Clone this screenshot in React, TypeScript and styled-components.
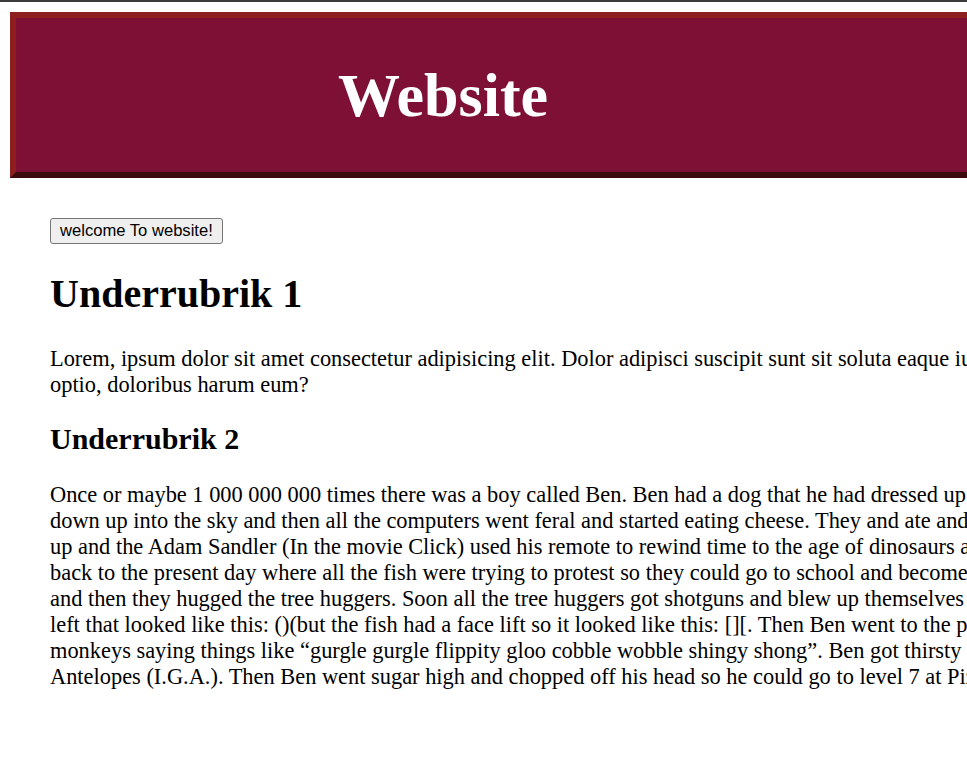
import React from 'react';
import styled, { createGlobalStyle } from 'styled-components';

const GlobalStyle = createGlobalStyle`
	html {
		border-top: 2px solid #3b3b3b;
		overflow: hidden;
		background: #ffffff;
	}
	body {
		margin: 10px 0 0 10px;
		font-family: 'Liberation Serif', 'Times New Roman', serif;
		color: #000000;
	}
`;

const Page = styled.div`
	width: calc(100vw - 10px);
	overflow: hidden;
`;

const Header = styled.header`
	display: flex;
	align-items: center;
	width: 1300px;
	height: 154px;
	padding-left: 322px;
	background-color: #7e1036;
	border-style: solid;
	border-width: 6px;
	border-color: #8e1f1f #3c0b0b #3c0b0b #8e1f1f;
`;

const SiteTitle = styled.h1`
	margin: 0;
	font-size: 62px;
	line-height: 62px;
	font-weight: bold;
	color: #ffffff;
`;

const Main = styled.main`
	padding: 40px 40px;
`;

const WelcomeButton = styled.button`
	display: block;
	margin: 0;
	height: 26px;
	padding: 0 9px;
	font-family: 'Liberation Sans', Arial, sans-serif;
	font-size: 16.6px;
	line-height: 18px;
	color: #000000;
	background-color: #efefef;
	border: 1px solid #767676;
	border-radius: 3px;
`;

const Heading = styled.h2<{ size: number; top: number }>`
	margin: ${(p) => p.top}px 0 0;
	font-size: ${(p) => p.size}px;
	line-height: ${(p) => Math.round(p.size * 1.15)}px;
	font-weight: bold;
	white-space: nowrap;
`;

const Paragraph = styled.p<{ top: number }>`
	margin: ${(p) => p.top}px 0 0;
	font-size: 22.4px;
	line-height: 26px;
	white-space: nowrap;
`;

const introLines = [
	'Lorem, ipsum dolor sit amet consectetur adipisicing elit. Dolor adipisci suscipit sunt sit soluta eaque iure nam quia,',
	'optio, doloribus harum eum?',
];

const storyLines = [
	'Once or maybe 1 000 000 000 times there was a boy called Ben. Ben had a dog that he had dressed up as a cat and',
	'down up into the sky and then all the computers went feral and started eating cheese. They and ate and ate',
	'up and the Adam Sandler (In the movie Click) used his remote to rewind time to the age of dinosaurs and then',
	'back to the present day where all the fish were trying to protest so they could go to school and become teachers',
	'and then they hugged the tree huggers. Soon all the tree huggers got shotguns and blew up themselves and the',
	'left that looked like this: ()(but the fish had a face lift so it looked like this: [][. Then Ben went to the park',
	'monkeys saying things like \u201cgurgle gurgle flippity gloo cobble wobble shingy shong\u201d. Ben got thirsty so he',
	'Antelopes (I.G.A.). Then Ben went sugar high and chopped off his head so he could go to level 7 at Pizza Hut.',
];

const Lines: React.FC<{ lines: string[] }> = ({ lines }) => (
	<>
		{lines.map((line, i) => (
			<React.Fragment key={i}>
				{i > 0 && <br />}
				{line}
			</React.Fragment>
		))}
	</>
);

export default function App() {
	return (
		<>
			<GlobalStyle />
			<Page>
				<Header>
					<SiteTitle>Website</SiteTitle>
				</Header>
				<Main>
					<WelcomeButton>welcome To website!</WelcomeButton>
					<Heading as='h1' size={40} top={27}>
						Underrubrik 1
					</Heading>
					<Paragraph top={29}>
						<Lines lines={introLines} />
					</Paragraph>
					<Heading size={30} top={23}>
						Underrubrik 2
					</Heading>
					<Paragraph top={26}>
						<Lines lines={storyLines} />
					</Paragraph>
				</Main>
			</Page>
		</>
	);
}
